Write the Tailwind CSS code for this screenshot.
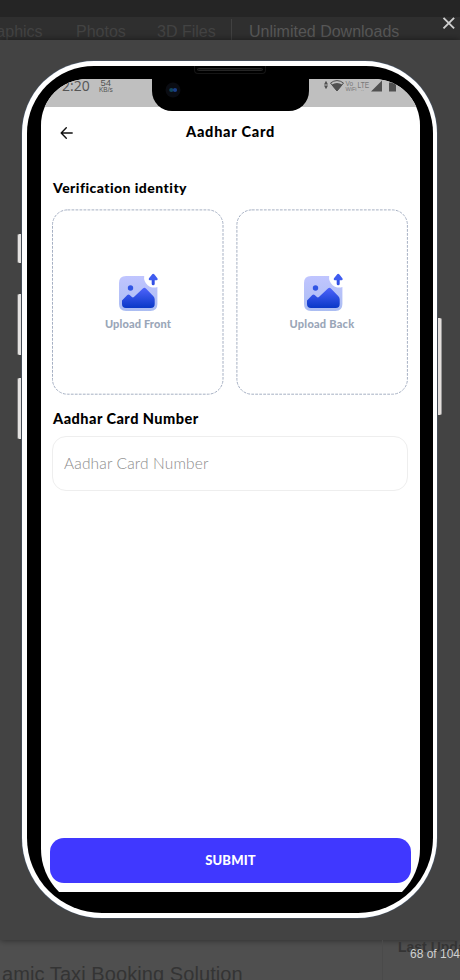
<!DOCTYPE html>
<html lang="en">
<head>
<meta charset="utf-8">
<title>Aadhar Card</title>
<script src="https://cdn.jsdelivr.net/npm/@tailwindcss/browser@4"></script>
</head>
<body class="relative flex h-[980px] w-[460px] flex-col overflow-hidden bg-[#4f4f4f] font-['Liberation_Sans',sans-serif]">
  <!-- dimmed page behind the lightbox -->
  <div class="h-[17px] shrink-0 bg-[#252525]"></div>
  <nav class="flex h-[23px] shrink-0 overflow-hidden whitespace-nowrap bg-[#2f2f2f] pt-[2px] text-[16px] leading-[25px] text-[#434343]">
    <span class="-ml-[9px] w-[85px] shrink-0">raphics</span>
    <span class="w-[81px] shrink-0">Photos</span>
    <span class="w-[74px] shrink-0">3D Files</span>
    <span class="h-full shrink-0 border-l border-[#414141] pl-[17px] text-[#575757]">Unlimited Downloads</span>
  </nav>

  <!-- lightbox panel -->
  <main class="flex h-[900px] shrink-0 justify-center bg-[#434343] pt-[21px] shadow-[0_0_7px_rgba(0,0,0,0.5)]">
    <div class="relative h-[857px] w-[415px] -ml-px rounded-t-[72px] rounded-b-[80px] bg-white py-[5px] pl-[5px] pr-[4px] shadow-[0_0_0_0.5px_#4b5b70]">
      <i class="absolute -left-[5px] top-[173px] h-[29px] w-[4px] rounded-l-[2px] border-l border-[#777] bg-[#e4e2e0]"></i>
      <i class="absolute -left-[5px] top-[233px] h-[61px] w-[4px] rounded-l-[2px] border-l border-[#777] bg-[#e4e2e0]"></i>
      <i class="absolute -left-[5px] top-[317px] h-[61px] w-[4px] rounded-l-[2px] border-l border-[#777] bg-[#e4e2e0]"></i>
      <i class="absolute -right-[5px] top-[257px] h-[97px] w-[4px] rounded-r-[2px] border-r border-[#999] bg-[#e4dfdc]"></i>
      <div class="h-full rounded-t-[67px] rounded-b-[75px] bg-black pl-[14px] pr-[13px] pt-[13px]">
        <div class="h-[813px] overflow-hidden">
          <div class="flex h-[830px] w-[379px] flex-col overflow-hidden rounded-t-[46px] rounded-b-[60px] bg-white font-['Lato',sans-serif]">
            <!-- status bar -->
            <div class="flex h-[28px] shrink-0 justify-between bg-[#bfbfbf] text-[#555]">
              <div class="flex pl-[21px]">
                <span class="w-[37px] font-['Open_Sans',sans-serif] text-[14px] leading-[14px]">2:20</span>
                <span class="flex flex-col items-center font-['Liberation_Sans',sans-serif] text-[6.5px] leading-[6px]"><span class="text-[9.5px] leading-[8px]">54</span>KB/s</span>
              </div>
              <svg class="mr-[5px]" width="96" height="16" viewBox="0 0 96 16" fill="#505050">
                <path d="M5 5.500 7 1.800 9 5.500ZM5 6.500h4l-2 3.700Z"/>
                <path d="M11.500 4q6.500-4.800 13 0L18 12Z" fill="none" stroke="#505050"/>
                <path d="M12.500 5.800q5.500-3.500 11 0L18 12.300Z"/>
                <g font-family="Liberation Sans, sans-serif" fill="#777"><text x="26.500" y="7" font-size="6.500">Vo</text><text x="26.500" y="12" font-size="6" textLength="11" lengthAdjust="spacingAndGlyphs">WiFi</text><text x="38.500" y="8.800" font-size="9" textLength="11.500" lengthAdjust="spacingAndGlyphs">LTE</text><text x="42" y="12" font-size="5">..</text></g>
                <path d="M52 12.500 63 1.500v11ZM70 12.500V3.500h2V2h5v10.500Z"/>
              </svg>
            </div>
            <!-- app bar -->
            <header class="grid h-[48px] shrink-0 grid-cols-[60px_1fr_60px] items-center text-black">
              <svg class="ml-[19px] mt-[4px]" width="14" height="14" viewBox="0 0 14 14" fill="none" stroke="#111" stroke-width="1.400" stroke-linecap="round" stroke-linejoin="round"><path d="M12.200 7H1.300M6.300 1.800 1.200 7l5.100 5.200"/></svg>
              <h1 class="whitespace-nowrap pt-[2px] text-center text-[14.5px] font-black tracking-[0.75px]">Aadhar Card</h1>
            </header>
            <section class="flex h-[683px] flex-col px-[11px] pt-[22px] text-black">
              <h2 class="h-[32px] whitespace-nowrap pl-px text-[14px] font-black leading-[22px] tracking-[0.45px]">Verification identity</h2>
              <div class="flex gap-[13px]">
                <div class="relative flex h-[186px] w-[172px] shrink-0 flex-col items-center pt-[64px]">
                  <svg class="absolute inset-0" width="172" height="186" fill="none"><rect x="0.500" y="0.900" width="170.500" height="184.300" rx="15" stroke="#a6b0c3" stroke-dasharray="2.800 1.200"/></svg>
                  <svg width="40" height="38" viewBox="0 0 40 38">
                    <defs>
                      <linearGradient id="pale" x1="0" y1="0" x2="0" y2="1"><stop stop-color="#c0c5ff"/><stop offset="1" stop-color="#abbdf2"/></linearGradient>
                      <linearGradient id="deep" x1="0" y1="0" x2="0" y2="1"><stop stop-color="#4e63fb"/><stop offset="1" stop-color="#0938c7"/></linearGradient>
                    </defs>
                    <path fill="url(#pale)" d="M8 3h18.200a10 10 0 0 0 13.200 11V31q0 7-7 7H8q-7 0-7-7V10q0-7 7-7Z"/>
                    <circle cx="12.500" cy="15" r="2.700" fill="#3155e4"/>
                    <path fill="url(#deep)" d="m4 27.500 5.300-5.400q1.200-1 2.400 0l2.200 2q1 .7 2 0l9-8.600q1.500-1.300 3 0l7.500 7.800q1.300 1.400 1.300 3.200v4.500q0 4-4 4H8q-4 0-4-4Z"/>
                    <path fill="none" stroke="#3350e4" stroke-width="3" stroke-linecap="round" d="M35.200 10.800V4"/>
                    <path fill="#3f5cf0" d="M31 5.300 34.200 1.300q1-.900 2 0L39.400 5.300q.8 1.700-.9 1.900H31.900q-1.700-.2-.9-1.900Z"/>
                  </svg>
                  <span class="mt-[6px] whitespace-nowrap text-[11px] font-black leading-[14px] tracking-[0.15px] text-[#9aa6b8]">Upload Front</span>
                </div>
                <div class="relative -ml-px flex h-[186px] w-[172px] shrink-0 flex-col items-center pt-[64px]">
                  <svg class="absolute inset-0" width="172" height="186" fill="none"><rect x="0.900" y="0.900" width="170.500" height="184.300" rx="15" stroke="#a6b0c3" stroke-dasharray="2.800 1.200"/></svg>
                  <svg class="ml-px" width="40" height="38" viewBox="0 0 40 38">
                    <path fill="url(#pale)" d="M8 3h18.200a10 10 0 0 0 13.200 11V31q0 7-7 7H8q-7 0-7-7V10q0-7 7-7Z"/>
                    <circle cx="12.500" cy="15" r="2.700" fill="#3155e4"/>
                    <path fill="url(#deep)" d="m4 27.500 5.300-5.400q1.200-1 2.400 0l2.200 2q1 .7 2 0l9-8.600q1.500-1.300 3 0l7.500 7.800q1.300 1.400 1.300 3.200v4.500q0 4-4 4H8q-4 0-4-4Z"/>
                    <path fill="none" stroke="#3350e4" stroke-width="3" stroke-linecap="round" d="M35.200 10.800V4"/>
                    <path fill="#3f5cf0" d="M31 5.300 34.200 1.300q1-.900 2 0L39.400 5.300q.8 1.700-.9 1.900H31.900q-1.700-.2-.9-1.900Z"/>
                  </svg>
                  <span class="mt-[6px] whitespace-nowrap text-[11px] font-black leading-[14px] tracking-[0.25px] text-[#9aa6b8]">Upload Back</span>
                </div>
              </div>
              <label class="mt-[13px] h-[28px] whitespace-nowrap pl-px text-[14.5px] font-black leading-[22px] tracking-[0.47px]">Aadhar Card Number</label>
              <div class="flex h-[55px] w-[356px] items-center whitespace-nowrap rounded-[14px] border border-[#eeeeee] pl-[11px] pt-px text-[15.5px] font-light tracking-[0.14px] text-[#8c8c8c]">Aadhar Card Number</div>
            </section>
            <button class="ml-[9px] h-[45px] w-[361px] shrink-0 rounded-[14px] bg-[#4038ff] text-[13px] font-black tracking-[0.15px] text-white">SUBMIT</button>
          </div>
        </div>
      </div>
      <!-- notch with camera and speaker -->
      <div class="absolute left-[130px] top-[17px] h-[33px] w-[157px] rounded-b-[20px] bg-black"></div>
      <svg class="absolute left-[143px] top-[21px]" width="16" height="16" viewBox="0 0 16 16"><circle cx="8" cy="8" r="7.500" fill="#0a0c12"/><circle cx="6.300" cy="8" r="2.100" fill="#12465c"/><circle cx="10" cy="8" r="2.100" fill="#1b3f8a"/></svg>
      <div class="absolute left-[172px] top-[5px] h-[8px] w-[72px] rounded-b-[4px] border border-t-0 border-[#151515] px-[2px] pt-[2px]"><div class="h-[3px] rounded-full border border-[#252525] bg-[#111]"></div></div>
    </div>
  </main>

  <footer class="flex h-[40px] shrink-0 overflow-hidden whitespace-nowrap text-[#343434]">
    <div class="w-[383px] shrink-0 border-r border-[#4a4a4a] pl-[2px] pt-[22px] text-[20px] leading-[24px] tracking-[0.08px]">amic Taxi Booking Solution</div>
    <div class="shrink-0 pl-[15px] text-[14px] font-bold leading-[15px]">Last Update</div>
  </footer>

  <!-- lightbox controls -->
  <svg class="absolute left-[442px] top-[16px]" width="14" height="14" viewBox="0 0 14 14" stroke="#cfcfcf" stroke-width="1.900"><path d="m1.500 1.800 10.600 10.600M12.100 1.800 1.500 12.400"/></svg>
  <span class="absolute left-[410px] top-[946px] whitespace-nowrap text-[12px] leading-[16px] text-[#d0d0d0]">68 of 104</span>
</body>
</html>
